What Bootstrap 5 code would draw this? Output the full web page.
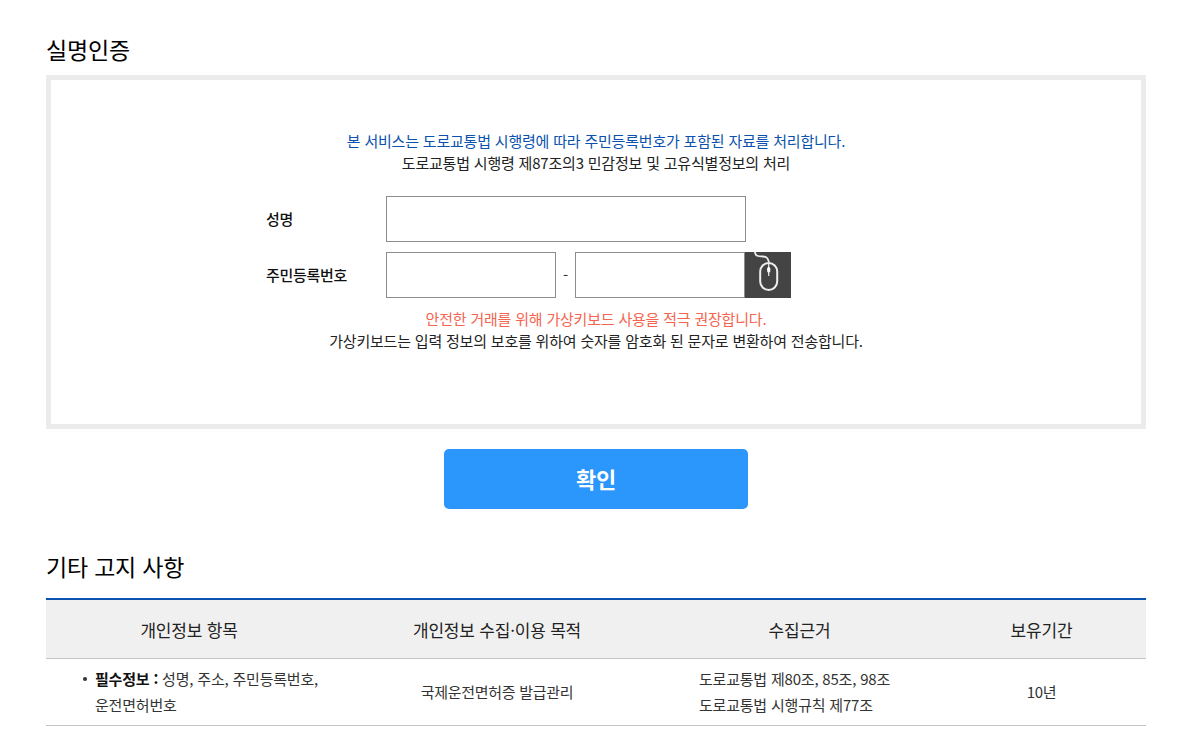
<!DOCTYPE html>
<html lang="ko"><head><meta charset="utf-8">
<link rel="stylesheet" href="https://cdn.jsdelivr.net/npm/bootstrap@5.3.0/dist/css/bootstrap.min.css">
<style>
html,body{overflow:hidden}
body{font-family:"Noto Sans CJK KR","Noto Sans",sans-serif;font-size:15px;letter-spacing:-.3px;color:#222;background:#fff}
.pg{width:1100px;margin-left:46px;height:756px;overflow:hidden}
.ttl{font-size:23px;font-weight:400;line-height:32px;color:#000;margin:0;letter-spacing:-.2px}
.ttl1{padding-top:33px;height:75px}
.ttl2{margin-top:41px;height:33px}
.auth{height:354px;border:5px solid #ebebeb;padding-top:50px}
.msg{font-size:15px;line-height:22px;text-align:center;margin:0;letter-spacing:-.2px}
.c-blue{color:#0a52ad}.c-red{color:#f4644f}
.frm{margin-top:22px;margin-left:215px;display:flex;flex-direction:column;gap:10px}
.lbl{width:120px;font-weight:500;font-size:15px;color:#111}
.inp{height:46px;border:1px solid #8c8c8c;background:#fff;border-radius:0;padding:0 8px}
.inp-l{width:360px}.inp-s{width:170px}
.dash{width:19px;text-align:center;color:#333}
.kbd-btn{width:46px;height:46px;background:#444;border:0;padding:0;display:block}
.notes{margin-top:10px}
.cta{width:304px;height:60px;background:#2b96fb;border:0;border-radius:5px;color:#fff;font-size:22px;font-weight:700;letter-spacing:-.3px;margin:20px auto 0;display:block;padding:0 0 2px}
.tbl{width:1100px;margin:15px 0 0;border-top:2px solid #0a52ad;border-collapse:collapse;table-layout:fixed}
.tbl th{height:59px;background:#f0f0f0;font-weight:400;font-size:17px;letter-spacing:-.2px;text-align:center;vertical-align:middle;border-bottom:1px solid #c4c4c4;color:#222;padding:2px 0 0}
.tbl td{height:67px;text-align:center;vertical-align:middle;border-bottom:1px solid #c4c4c4;line-height:26px;padding:0;color:#333}
.tbl td.lft{text-align:left;padding-left:49px;letter-spacing:-.2px}
.bul{display:block;position:relative}
.bul::before{content:"";position:absolute;left:-12px;top:11px;width:4px;height:4px;border-radius:50%;background:#333}
.tbl td.lft b{font-weight:700;color:#111}
.basis{display:inline-block;text-align:left;letter-spacing:-.2px;margin-right:10px}
</style></head><body>
<div class="pg">
<h2 class="ttl ttl1">실명인증</h2>
<section class="auth">
<p class="msg c-blue">본 서비스는 도로교통법 시행령에 따라 주민등록번호가 포함된 자료를 처리합니다.</p>
<p class="msg">도로교통법 시행령 제87조의3 민감정보 및 고유식별정보의 처리</p>
<div class="frm">
<div class="d-flex align-items-center"><label class="lbl" for="nm">성명</label><input id="nm" class="inp inp-l" type="text"></div>
<div class="d-flex align-items-center"><label class="lbl" for="r1">주민등록번호</label><input id="r1" class="inp inp-s" type="text"><span class="dash">-</span><input id="r2" class="inp inp-s" type="password" aria-label="주민등록번호 뒷자리">
<button class="kbd-btn" type="button" aria-label="가상키보드"><svg width="46" height="46" viewBox="0 0 46 46" fill="none" stroke="#eee"><path d="M10 0c0 4 3 4.500 8 4.500 4 0 5 2 6 6" stroke-width="1.800"/><rect x="15.200" y="11" width="17" height="27" rx="8.500" stroke-width="2"/><path d="M23.700 11v13" stroke-width="1.200"/><rect x="22.100" y="15" width="3.200" height="5.500" rx="1.600" fill="#fff" stroke="none"/></svg></button></div>
</div>
<div class="notes">
<p class="msg c-red">안전한 거래를 위해 가상키보드 사용을 적극 권장합니다.</p>
<p class="msg">가상키보드는 입력 정보의 보호를 위하여 숫자를 암호화 된 문자로 변환하여 전송합니다.</p>
</div>
</section>
<button class="cta" type="button">확인</button>
<h2 class="ttl ttl2">기타 고지 사항</h2>
<table class="tbl">
<colgroup><col style="width:286px"><col style="width:330px"><col style="width:275px"><col style="width:209px"></colgroup>
<thead><tr><th>개인정보 항목</th><th>개인정보 수집·이용 목적</th><th>수집근거</th><th>보유기간</th></tr></thead>
<tbody><tr>
<td class="lft"><span class="bul"><b>필수정보 :</b> 성명, 주소, 주민등록번호,<br>운전면허번호</span></td>
<td>국제운전면허증 발급관리</td>
<td><span class="basis">도로교통법 제80조, 85조, 98조<br>도로교통법 시행규칙 제77조</span></td>
<td>10년</td>
</tr></tbody>
</table>
</div>
</body></html>
